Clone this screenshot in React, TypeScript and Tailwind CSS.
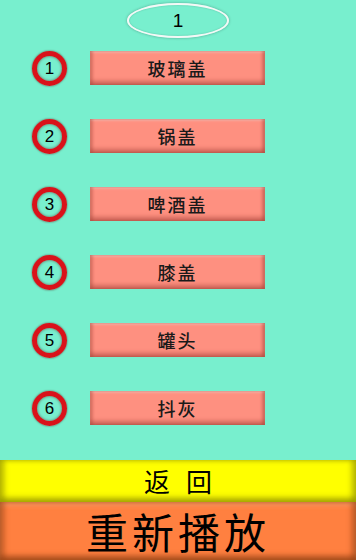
const items = ["玻璃盖", "锅盖", "啤酒盖", "膝盖", "罐头", "抖灰"];

const cjk = { fontFamily: '"Noto Sans CJK SC", sans-serif' };

export default function App() {
  return (
    <div className="flex h-[560px] w-[356px] flex-col bg-[#78efce]" style={cjk}>
      <div className="mx-auto mt-[3px] flex h-[35px] w-[102px] items-center justify-center rounded-[50%] border-[2px] border-[#f4f8f6] shadow-[0_0_3px_rgba(0,0,0,0.3),inset_0_0_2px_rgba(0,0,0,0.2)]">
        <span className="text-[19px] leading-none text-black" style={{ fontFamily: '"Liberation Sans", sans-serif' }}>
          1
        </span>
      </div>

      <div className="mt-[13px] flex flex-col gap-[34px]">
        {items.map((label, i) => (
          <div key={label} className="flex h-[34px] items-center">
            <div className="ml-[32px] flex h-[35px] w-[35px] items-center justify-center rounded-full border-[5px] border-[#d9121a] shadow-[inset_0_0_3px_rgba(90,0,0,0.6),0_0_2px_rgba(90,0,0,0.7)]">
              <span className="text-[17px] leading-none text-black" style={{ fontFamily: '"Liberation Sans", sans-serif' }}>
                {i + 1}
              </span>
            </div>
            <div className="ml-[23px] flex h-[34px] w-[175px] items-center justify-center bg-[#fe9080] shadow-[inset_0_-4px_4px_rgba(120,30,20,0.35),inset_3px_0_3px_rgba(120,30,20,0.2),inset_-3px_0_3px_rgba(120,30,20,0.25),inset_0_2px_2px_rgba(255,255,255,0.35)]">
              <span className="text-[18px] font-medium leading-none tracking-[2px] text-[#1a1a1a]">{label}</span>
            </div>
          </div>
        ))}
      </div>

      <div className="mt-auto flex h-[42px] items-center justify-center bg-[#ffff00] shadow-[inset_0_-5px_5px_rgba(120,120,0,0.45),inset_5px_0_5px_rgba(120,120,0,0.4),inset_-5px_0_5px_rgba(120,120,0,0.4)]">
        <span className="pl-[16px] text-[26px] leading-none tracking-[16px] text-black">返回</span>
      </div>
      <div className="flex h-[58px] items-center justify-center bg-[#ff8040] shadow-[inset_0_-5px_5px_rgba(120,50,10,0.45),inset_5px_0_5px_rgba(120,50,10,0.35),inset_-5px_0_5px_rgba(120,50,10,0.35),inset_0_4px_4px_rgba(255,200,160,0.35)]">
        <span className="text-[42px] leading-[50px] tracking-[4px] text-black">重新播放</span>
      </div>
    </div>
  );
}
